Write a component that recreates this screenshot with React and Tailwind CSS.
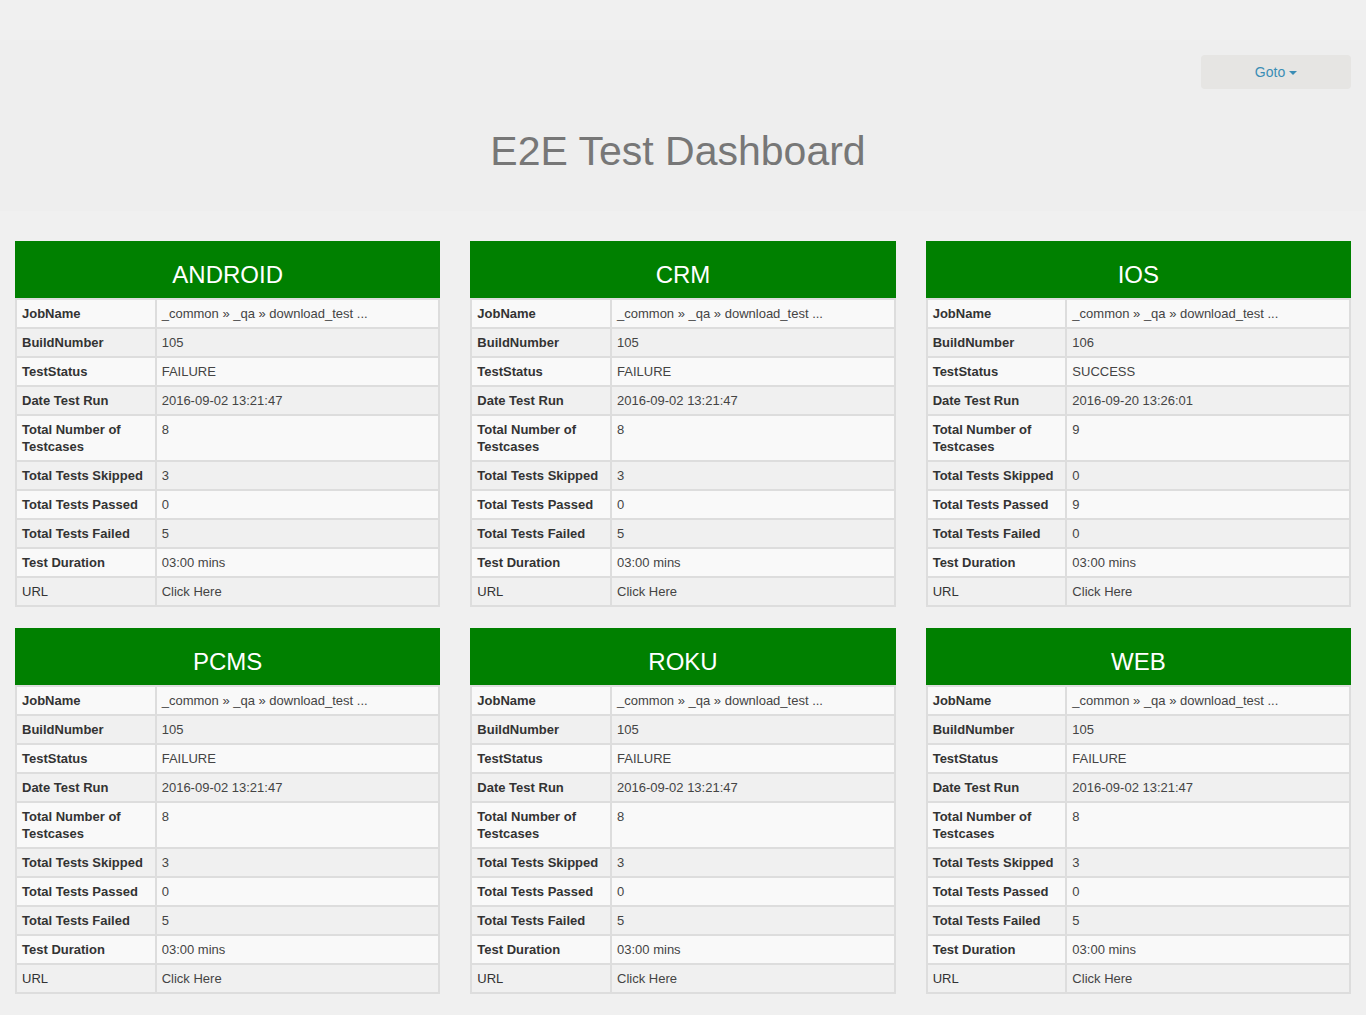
import React from "react";

const base = {
  JobName: "_common » _qa » download_test ...",
  BuildNumber: "105",
  TestStatus: "FAILURE",
  "Date Test Run": "2016-09-02 13:21:47",
  "Total Number of Testcases": "8",
  "Total Tests Skipped": "3",
  "Total Tests Passed": "0",
  "Total Tests Failed": "5",
  "Test Duration": "03:00 mins",
  URL: "Click Here",
};

const ios = {
  ...base,
  BuildNumber: "106",
  TestStatus: "SUCCESS",
  "Date Test Run": "2016-09-20 13:26:01",
  "Total Number of Testcases": "9",
  "Total Tests Skipped": "0",
  "Total Tests Passed": "9",
  "Total Tests Failed": "0",
};

const cards = [
  ["ANDROID", base],
  ["CRM", base],
  ["IOS", ios],
  ["PCMS", base],
  ["ROKU", base],
  ["WEB", base],
];

function Card({ title, data }) {
  const entries = Object.entries(data);
  return (
    <div>
      <div className="bg-[#008000] text-center">
        <h3 className="pt-[20px] pb-[10px] text-[24px] leading-[27px] text-white font-normal">{title}</h3>
      </div>
      <table className="w-full border-collapse border-2 border-[#dddddd] text-[13px] leading-[17px]">
        <tbody>
          {entries.map(([k, v], i) => (
            <tr key={k} className={i % 2 === 0 ? "bg-[#f9f9f9]" : "bg-[#f0f0f0]"}>
              <td
                className={
                  "w-[33%] border-2 border-[#dddddd] px-[5px] py-[5px] align-top text-[#333333] " +
                  (k === "URL" ? "font-normal" : "font-bold")
                }
              >
                {k}
              </td>
              <td className="border-2 border-[#dddddd] px-[5px] py-[5px] align-top text-[#444444]">{v}</td>
            </tr>
          ))}
        </tbody>
      </table>
    </div>
  );
}

export default function App() {
  return (
    <div className="min-h-[1015px] bg-[#f0f0f0] pb-[20px]" style={{ fontFamily: '"Liberation Sans", Arial, sans-serif' }}>
      <div className="h-[40px]" />
      <div className="bg-[#eeeeee] pt-[15px] pb-[38px] px-[15px]">
        <div className="flex justify-end">
          <button className="flex h-[34px] w-[150px] items-center justify-center gap-[4px] rounded-[4px] bg-[#e6e5e3] text-[14px] text-[#3b8db5]">
            <span>Goto</span>
            <span className="inline-block h-0 w-0 border-x-[4px] border-t-[4px] border-x-transparent border-t-[#3b8db5] mt-[1px]" />
          </button>
        </div>
        <h1 className="mt-[40px] pr-[10px] text-center text-[41px] leading-[44px] font-normal text-[#777777]">E2E Test Dashboard</h1>
      </div>
      <div className="mt-[30px] grid grid-cols-3 gap-x-[30px] gap-y-[21px] px-[15px]">
        {cards.map(([t, d]) => (
          <Card key={t} title={t} data={d} />
        ))}
      </div>
    </div>
  );
}
